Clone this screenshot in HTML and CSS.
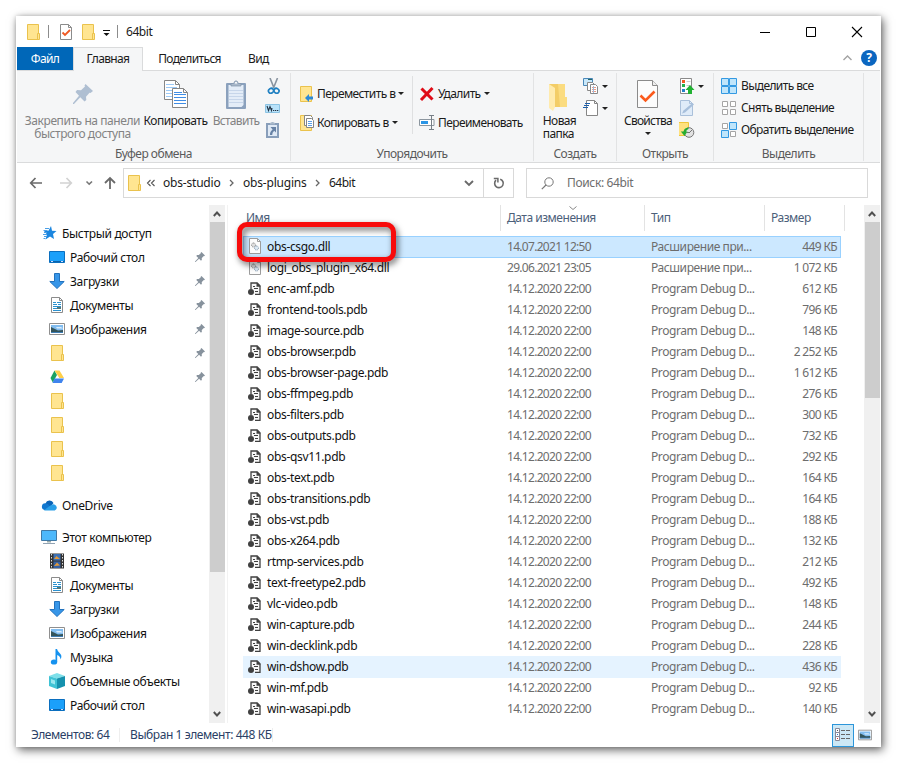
FILE: index.html
```html
<!DOCTYPE html>
<html lang="ru">
<head>
<meta charset="utf-8">
<title>64bit</title>
<link rel="stylesheet" href="styles.css">
</head>
<body>
<svg class="defs" aria-hidden="true">
  <symbol id="folder" viewBox="0 0 16 16"><path d="M2.5.5h11v10l1 1v4h-12z" fill="#ffe591" stroke="#eac24d"/><path d="M12.5 15V9.5h2V15" fill="#ffe591" stroke="#eac24d"/></symbol>
  <symbol id="doccheck" viewBox="0 0 16 16"><path d="M2.5.5h8l3 3v12h-11z" fill="#fff" stroke="#8b8b8b"/><path d="M10.500.5v3h3" fill="none" stroke="#8b8b8b"/><path d="M4.500 8.500l2.500 2.500 5-5" fill="none" stroke="#f05a23" stroke-width="1.800"/></symbol>
  <symbol id="bigcheck" viewBox="0 0 22 28"><path d="M.5.5h15l5 5v22H.5z" fill="#fcfcfc" stroke="#8b8b8b"/><path d="M15.500.5v5h5" fill="#eee" stroke="#8b8b8b"/><path d="M3.500 15.500l5 5 9-9" fill="none" stroke="#fb5a1c" stroke-width="2.600"/></symbol>
  <symbol id="bigpin" viewBox="0 0 20 20"><path d="M12.500 0L20 7l-2.500 2-1-.2-3.500 4 .3 3.200-1.800 1.500-4.200-4.300L1 20H0v-1l6-7.300L2.500 8 4 6l4 .2 4-3.700-.5-1z" fill="#afbfd2"/></symbol>
  <symbol id="copy" viewBox="0 0 24 28"><path d="M.5.500h11l4 4v15H.5z" fill="#fff" stroke="#868686"/><path d="M11.500.5v4h4" fill="none" stroke="#868686"/><path d="M2 4.500h8M2 7.500h11M2 10.500h11M2 13.500h6M2 16.500h6" stroke="#9ccaf7"/><path d="M8.500 8.500h11l4 4v15h-15z" fill="#fff" stroke="#868686"/><path d="M19.500 8.500v4h4" fill="none" stroke="#868686"/><path d="M10 12.500h8M10 14.500h12M10 17.500h12M10 20.500h12M10 23.500h12" stroke="#3f8de5"/></symbol>
  <symbol id="paste" viewBox="0 0 20 29"><rect y="3" width="20" height="26" rx="1" fill="#8ba1bd"/><path d="M2.500 5h15v20l-2 2h-13z" fill="#e4edf8"/><path d="M3 10.500h14M3 13.500h14M3 16.500h14M3 19.500h14M3 22.500h14" stroke="#c7d6ea"/><path d="M5 6V3.500h2.500L9 1h2l1.500 2.500H15V6z" fill="#a9b8ca" stroke="#8093aa" stroke-width=".7"/><circle cx="10" cy="2.800" r="1" fill="#fff"/></symbol>
  <symbol id="cut" viewBox="0 0 16 16"><path d="M5 0l4 10M12.500 0l-4 10" stroke="#8994a0" stroke-width="1.600"/><ellipse cx="6" cy="12.800" rx="2.600" ry="2.300" transform="rotate(-35 6 12.800)" fill="none" stroke="#2080c2" stroke-width="1.700"/><ellipse cx="11.500" cy="12.800" rx="2.600" ry="2.300" transform="rotate(35 11.500 12.800)" fill="none" stroke="#2080c2" stroke-width="1.700"/></symbol>
  <symbol id="path" viewBox="0 0 16 16"><path d="M.5 4.500h14v8H.5z" fill="#b8e2fa" stroke="#8bc3e3"/><path d="M2 6l1.500 4.500L5 6.500l1.500 4L7 8" fill="none" stroke="#234" stroke-width="1.100"/><path d="M8 10.500h1.300M10 10.500h1.300M12 10.500h1.300" stroke="#234"/></symbol>
  <symbol id="shortcut" viewBox="0 0 14 16"><path d="M0 1h13v15H0z" fill="#889eba"/><path d="M2 3h9v11H2z" fill="#dfe9f5"/><path d="M4 2.500V1l2-1h1l2 1v1.500z" fill="#a8b8ca"/><path d="M4.500 5H10v5.500L8.200 8.800Q6 10.500 6.200 13H4q-.3-3.500 2.600-5.600z" fill="#6782a5"/></symbol>
  <symbol id="moveto" viewBox="0 0 16 16"><path d="M1.500.5h11v15h-11z" fill="#ffe591" stroke="#eac24d"/><path d="M6 12l4-4v2.500h4v3h-4V16z" fill="#2c8ad8"/></symbol>
  <symbol id="copyto" viewBox="0 0 16 16"><path d="M1.500.5h11v15h-11z" fill="#ffe591" stroke="#eac24d"/><path d="M5.500.5h6l2 2v8h-8z" fill="#fff" stroke="#858585"/><path d="M7.500 3.500h5l2 2v7h-7z" fill="#fff" stroke="#858585"/><path d="M9 6.500h4M9 8.500h4M9 10.500h4" stroke="#5b9fe8"/></symbol>
  <symbol id="del" viewBox="0 0 16 16"><path d="M2.500 2.500l11 11M13.500 2l-11.500 12" stroke="#df0c17" stroke-width="3"/></symbol>
  <symbol id="rename" viewBox="0 0 16 16"><path d="M.5 4.500h14.500v6H.5z" fill="#fff" stroke="#8c969f"/><path d="M2 6h7v3H2z" fill="#2b95e6"/><path d="M10 .5h5M12.500.5v14M10 14.500h5" stroke="#777f86" fill="none"/></symbol>
  <symbol id="newfolder" viewBox="0 0 18 28"><path d="M0 1h16v13h2v10H4z" fill="#f3cd67"/><path d="M9 1h7v13h2v10h-7z" fill="#fbdc80"/><path d="M0 1l6 4v19l-2 4-4-3z" fill="#ffebae"/></symbol>
  <symbol id="newitem" viewBox="0 0 16 16"><path d="M.5.5h9v7h-9z" fill="#c9e8fa" stroke="#4a88b9"/><path d="M5 1.500h4" stroke="#266"/><path d="M4.500 4.500h5l3 3v5h-8z" fill="#fff" stroke="#888"/><path d="M7.500 6.500h5l2 2v7h-7z" fill="#fff" stroke="#888"/><path d="M9 9.500h4M9 11.500h4M9 13.500h4" stroke="#eb9a86"/><path d="M10.500 8v7" stroke="#9cbcdf"/></symbol>
  <symbol id="easy" viewBox="0 0 16 16"><path d="M3.500.5h8l3 3v12h-11z" fill="#fff" stroke="#868686"/><path d="M11.500.5v3h3" fill="none" stroke="#868686"/><path d="M2 3.500h5M1 5.500h5M0 7.500h5" stroke="#1d5ea8"/></symbol>
  <symbol id="open" viewBox="0 0 16 16"><path d="M1.500.5h11v15h-11z" fill="#fff" stroke="#8a8a8a"/><path d="M3 2h3v3H3z" fill="#f15a22"/><path d="M3 6h3v3H3z" fill="#23b14d"/><path d="M3 11h3v3H3z" fill="#2583c9"/><path d="M7.500 3.500h4M7.500 7.500h4" stroke="#ccc"/><path d="M11 7l4.500 5H13v4H9v-4H6.500z" fill="#22b233"/></symbol>
  <symbol id="edit" viewBox="0 0 16 16"><path d="M1.500.5h9l3 3v12h-12z" fill="#dfebf8" stroke="#aac0da"/><path d="M10.500.5v3h3" fill="none" stroke="#aac0da"/><path d="M3 13.500l1.500-3L13.500 3 15 4.500l-9 8z" fill="#a7bfdb"/></symbol>
  <symbol id="history" viewBox="0 0 16 16"><path d="M-.5.500h10v13h-10z" fill="#ffe17e" stroke="#efc63a"/><circle cx="10" cy="10.500" r="4.800" fill="#e2e2e2" stroke="#777"/><path d="M10 11l3-3M8 10.500h2" stroke="#777"/><path d="M9.500 5.500Q5 6 4.500 9.500H1.800L5.500 14l3-4.500H7Q7.500 7.500 9.500 7z" fill="#26ac31"/></symbol>
  <symbol id="selall" viewBox="0 0 16 16"><path d="M.5.5h7v7h-7zM8.500.5h7v7h-7zM.5 8.500h7v7h-7zM8.500 8.500h7v7h-7z" fill="#bfe5fb" stroke="#3399e2"/></symbol>
  <symbol id="selnone" viewBox="0 0 16 16"><path d="M1.500 1.500h5v5h-5zM9.500 1.500h5v5h-5zM1.500 9.500h5v5h-5zM9.500 9.500h5v5h-5z" fill="#fff" stroke="#a5a5a5"/></symbol>
  <symbol id="selinv" viewBox="0 0 16 16"><path d="M1.500 1.500h5v5h-5zM9.500 9.500h5v5h-5z" fill="#fff" stroke="#a5a5a5"/><path d="M8.500.5h7v7h-7zM.5 8.500h7v7h-7z" fill="#bfe5fb" stroke="#3399e2"/></symbol>
  <symbol id="star" viewBox="0 0 16 16"><path d="M10 1l1 4.800 4.500.3-3.500 3 1 5L9 11.500 4.500 14.500 6 9.500 3 6l4.500-.3z" fill="#1b86df"/><path d="M4 3.500h4M2.500 5.500h4M3 7.500h3M2 9.500h4M3 11.500h3M2.500 13.500h2" stroke="#4a9fe6"/></symbol>
  <symbol id="desktop" viewBox="0 0 16 16"><path d="M.5 2.500h15v11H.5z" fill="#1ba0fa" stroke="#0b6fbf"/><path d="M1 12.500h14" stroke="#0b62aa"/><path d="M2 12.500h2M12 12.500h2" stroke="#cdf"/></symbol>
  <symbol id="down" viewBox="0 0 16 16"><path d="M5.500.5h5v8h4.700L8 15.500.8 8.500h4.700z" fill="#3796e8" stroke="#2272bd"/></symbol>
  <symbol id="docs" viewBox="0 0 16 16"><path d="M2.500.5h8l3 3v12h-11z" fill="#fff" stroke="#8b8b8b"/><path d="M10.500.5v3h3" fill="none" stroke="#8b8b8b"/><path d="M4 5.500h3M8 5.500h4M4 7.500h4M9 7.500h3M4 9.500h8M4 11.500h4M4 13.500h8" stroke="#2a91cf"/><path d="M8 10h4v2H8z" fill="#577"/></symbol>
  <symbol id="pics" viewBox="0 0 16 16"><path d="M.5 2.500h15v11H.5z" fill="#fff" stroke="#8f8f8f"/><path d="M2 4h12v8H2z" fill="#82bdf0"/><path d="M7 6h5l2 1.500H8z" fill="#d9edfc"/><path d="M2 6l3 1.500 4 2 5-.5v2.500H2z" fill="#34545a"/><path d="M2 11.500h12" stroke="#3e7db5"/></symbol>
  <symbol id="drive" viewBox="0 0 16 16"><path d="M5.500 1.500L1.500 9l2.300 4.500L8 6z" fill="#1ca261"/><path d="M5.500 1.500h5L15 9h-4.700z" fill="#ffcf48"/><path d="M5.500 9.500H15l-2.300 4.500H3.500z" fill="#3f84ee"/></symbol>
  <symbol id="cloud" viewBox="0 0 16 16"><path d="M4.500 6.500a4.300 4.300 0 0 1 8-.5l-3 4-6 1z" fill="#0b64b8"/><path d="M3.500 13a3.400 3.400 0 0 1 .6-6.700q1.700 0 3 1l5 5.700z" fill="#1178d0"/><path d="M3 13.200l6-4.500q4-3 6 0 2 3-1.200 4.800H4z" fill="#2a9fe8"/></symbol>
  <symbol id="pc" viewBox="0 0 16 16"><path d="M.5 1.500h15v10H.5z" fill="#4db8fb" stroke="#4179a5"/><path d="M6 12h4v1.500H6z" fill="#9aa"/><path d="M2 14.500h12" stroke="#91a3b3"/></symbol>
  <symbol id="video" viewBox="0 0 16 16"><path d="M1 .5h14v15H1z" fill="#333"/><path d="M4.500 1h7v6.500h-7z" fill="#3c70b4"/><path d="M4.500 8.500h7V15h-7z" fill="#3561a3"/><path d="M5 6l2.500-3L11 6zM5 13l3-3.500 3 3z" fill="#e39a3a"/><path d="M2.500 1v14M13.500 1v14" stroke="#ddd" stroke-dasharray="1.500 1.500"/></symbol>
  <symbol id="music" viewBox="0 0 16 16"><ellipse cx="5" cy="13" rx="3.200" ry="2.600" fill="#1592ef"/><path d="M6.500 13V0H8q.5 2.500 3 4.500t.5 6q0-3.500-3.300-4.500v7z" fill="#1592ef"/></symbol>
  <symbol id="cube" viewBox="0 0 16 16"><path d="M0 3l8-3 8 3-8 2.500z" fill="#7ee0ea"/><path d="M0 3l8 2.500V16l-8-3z" fill="#3fc3d5"/><path d="M16 3L8 5.500V16l8-3z" fill="#1591ae"/><path d="M2 6l4 1.500v4L2 10z" fill="#9be8f0"/></symbol>
  <symbol id="pin" viewBox="0 0 10 10"><path d="M6.500 0L10 3.500l-1 .8-.6-.1-1.700 2 .2 1.600-.9.900-1.900-2L.5 10H0v-.5l3.300-3.600-2-1.900L2 3l1.800.1 2-1.800L5.700.8z" fill="#87929d"/></symbol>
  <symbol id="dll" viewBox="0 0 14 16"><path d="M1.500.5h8l3 3v12h-11z" fill="#fcfcfc" stroke="#9d9d9d"/><path d="M9.500.5v3h3" fill="none" stroke="#9d9d9d"/><circle cx="5.500" cy="7" r="2" fill="#ddd" stroke="#888" stroke-dasharray="1 .6"/><circle cx="8.500" cy="10" r="2" fill="#dde9f3" stroke="#7f97ac" stroke-dasharray="1 .6"/></symbol>
  <symbol id="pdb" viewBox="0 0 14 16"><path d="M3 7V1h6.200L12 3.800V12.300H7" fill="#f7f7f7" stroke="#404040" stroke-width="1.300"/><path d="M8.500.5v4.200h4.200z" fill="#404040"/><path d="M5 4.500h2M6 6.500h4M7 9.500h3" stroke="#404040"/><circle cx="3" cy="10" r="3" fill="#404040"/></symbol>
</svg>

<main class="window">
  <header class="titlebar">
    <svg class="i16 t-folder"><use href="#folder"/></svg>
    <i class="tsep"></i>
    <svg class="i16 t-doc"><use href="#doccheck"/></svg>
    <svg class="i16 t-new"><use href="#folder"/></svg>
    <svg class="t-drop" viewBox="0 0 7 6"><path d="M0 .5h7" stroke="#111"/><path d="M.5 3h6l-3 3z" fill="#111"/></svg>
    <i class="tsep"></i>
    <span class="title">64bit</span>
    <div class="winbtns">
      <svg viewBox="0 0 12 12"><path d="M1 6.500h10" stroke="#000"/></svg>
      <svg viewBox="0 0 12 12"><path d="M1.500 1.500h9v9h-9z" fill="none" stroke="#000"/></svg>
      <svg viewBox="0 0 12 12"><path d="M1 1l10 10M11 1L1 11" stroke="#000" stroke-width="1.100"/></svg>
    </div>
  </header>

  <nav class="tabs">
    <span class="tab file">Файл</span>
    <span class="tab active">Главная</span>
    <span class="tab share">Поделиться</span>
    <span class="tab view">Вид</span>
    <svg class="collapse" viewBox="0 0 9 6"><path d="M.5 5l4-4 4 4" fill="none" stroke="#a3a3a3" stroke-width="1.400"/></svg>
    <span class="help">?</span>
  </nav>

  <section class="ribbon">
    <div class="group g-clip">
      <div class="tools">
        <div class="big dim w-pin"><span class="pic"><svg width="20" height="20"><use href="#bigpin"/></svg></span><span>Закрепить на панели<br>быстрого доступа</span></div>
        <div class="big w-copy"><span class="pic"><svg width="24" height="28"><use href="#copy"/></svg></span><span>Копировать</span></div>
        <div class="big dim w-paste"><span class="pic"><svg width="20" height="29"><use href="#paste"/></svg></span><span>Вставить</span></div>
        <div class="stack"><div><svg class="i16"><use href="#cut"/></svg></div><div><svg class="i16"><use href="#path"/></svg></div><div><svg class="i16 narrow"><use href="#shortcut"/></svg></div></div>
      </div>
      <div class="caption">Буфер обмена</div>
    </div>
    <div class="group g-org">
      <div class="tools">
        <div class="pair left"><div><svg class="i16"><use href="#moveto"/></svg><span>Переместить в</span><i class="caret"></i></div><div><svg class="i16"><use href="#copyto"/></svg><span>Копировать в</span><i class="caret"></i></div></div>
        <div class="pair right"><div><svg class="i16"><use href="#del"/></svg><span>Удалить</span><i class="caret"></i></div><div><svg class="i16"><use href="#rename"/></svg><span>Переименовать</span></div></div>
      </div>
      <div class="caption">Упорядочить</div>
    </div>
    <div class="group g-new">
      <div class="tools">
        <div class="big w-new"><span class="pic"><svg width="18" height="28"><use href="#newfolder"/></svg></span><span>Новая<br>папка</span></div>
        <div class="stack"><div><svg class="i16"><use href="#newitem"/></svg><i class="caret"></i></div><div><svg class="i16"><use href="#easy"/></svg><i class="caret"></i></div></div>
      </div>
      <div class="caption">Создать</div>
    </div>
    <div class="group g-open">
      <div class="tools">
        <div class="big w-prop"><span class="pic"><svg width="22" height="28"><use href="#bigcheck"/></svg></span><span>Свойства</span><i class="caret"></i></div>
        <div class="stack"><div><svg class="i16"><use href="#open"/></svg><i class="caret"></i></div><div><svg class="i16"><use href="#edit"/></svg></div><div><svg class="i16"><use href="#history"/></svg></div></div>
      </div>
      <div class="caption">Открыть</div>
    </div>
    <div class="group g-sel">
      <div class="tools">
        <div class="stack"><div><svg class="i16"><use href="#selall"/></svg><span>Выделить все</span></div><div><svg class="i16"><use href="#selnone"/></svg><span>Снять выделение</span></div><div><svg class="i16"><use href="#selinv"/></svg><span>Обратить выделение</span></div></div>
      </div>
      <div class="caption">Выделить</div>
    </div>
  </section>

  <section class="address">
    <svg class="arrows" viewBox="0 0 90 20"><path d="M14 10H3M7.500 5L2.700 10l4.800 5" fill="none" stroke="#6a6a6a" stroke-width="1.700"/><path d="M32 10h11M38.500 5l4.800 5-4.800 5" fill="none" stroke="#d2d2d2" stroke-width="1.700"/><path d="M58.500 8.500l2.700 2.700L64 8.500" fill="none" stroke="#777" stroke-width="1.600"/><path d="M82 16V5M77 10l5-5 5 5" fill="none" stroke="#6a6a6a" stroke-width="1.800"/></svg>
    <div class="pathbox">
      <svg class="i16"><use href="#folder"/></svg>
      <svg class="dbl" viewBox="0 0 8 6"><path d="M3.500 0l-3 3 3 3M7.500 0l-3 3 3 3" fill="none" stroke="#555" stroke-width="1.100"/></svg>
      <span class="c1">obs-studio</span>
      <svg class="gt" viewBox="0 0 5 8"><path d="M1 1l3 3-3 3" fill="none" stroke="#666" stroke-width="1.300"/></svg>
      <span class="c2">obs-plugins</span>
      <svg class="gt" viewBox="0 0 5 8"><path d="M1 1l3 3-3 3" fill="none" stroke="#666" stroke-width="1.300"/></svg>
      <span class="c3">64bit</span>
      <svg class="hist" viewBox="0 0 10 7"><path d="M1 1l4 4 4-4" fill="none" stroke="#6a6a6a" stroke-width="1.900"/></svg>
      <div class="reload"><svg viewBox="0 0 12 12"><path d="M7.200 2.200A4.300 4.300 0 1 1 3 3.200" fill="none" stroke="#6a6a6a" stroke-width="1.600"/><path d="M.8 1.400h4.100v4" fill="none" stroke="#6a6a6a" stroke-width="1.500"/></svg></div>
    </div>
    <div class="search"><svg viewBox="0 0 13 13"><circle cx="8" cy="5" r="4.200" fill="none" stroke="#777"/><path d="M5 8L.8 12.200" stroke="#777" stroke-width="1.200"/></svg><span>Поиск: 64bit</span></div>
  </section>

  <section class="body">
    <aside class="nav" id="nav"></aside>
    <div class="scroll s-left"><svg viewBox="0 0 8 6"><path d="M.8 5L4 1.500 7.200 5" fill="none" stroke="#505050" stroke-width="1.900"/></svg><i></i><svg viewBox="0 0 8 6"><path d="M.8 1L4 4.500 7.200 1" fill="none" stroke="#505050" stroke-width="1.900"/></svg></div>
    <div class="files">
      <div class="head"><span>Имя</span><span>Дата изменения<svg class="sort" viewBox="0 0 8 4"><path d="M.5.5L4 3.500 7.500.5" fill="none" stroke="#888"/></svg></span><span>Тип</span><span>Размер</span></div>
      <div id="rows"></div>
      <div class="mark"></div>
    </div>
    <div class="scroll s-right"><svg viewBox="0 0 8 6"><path d="M.8 5L4 1.500 7.200 5" fill="none" stroke="#505050" stroke-width="1.900"/></svg><i></i><svg viewBox="0 0 8 6"><path d="M.8 1L4 4.500 7.200 1" fill="none" stroke="#505050" stroke-width="1.900"/></svg></div>
  </section>

  <footer class="status">
    <span class="st1">Элементов: 64</span><span class="st2">Выбран 1 элемент: 448 КБ</span>
    <div class="modes">
      <span class="mode on"><svg width="18" height="14" viewBox="0 0 18 14"><path d="M1.500.5h4v12h-4z" fill="#fff" stroke="#889"/><path d="M1.500 4.500h4M1.500 8.500h4" stroke="#889"/><path d="M3 2.500h1" stroke="#555"/><path d="M3 6.500h1" stroke="#27c"/><path d="M3 10.500h1" stroke="#d33"/><path d="M7 2.500h4M12 2.500h4M7 6.500h4M12 6.500h4M7 10.500h4M12 10.500h4" stroke="#666"/></svg></span>
      <span class="mode"><svg width="14" height="14" viewBox="0 1 16 14"><use href="#pics" width="16" height="16"/></svg></span>
    </div>
  </footer>
</main>
<script src="app.js"></script>
</body>
</html>
```
FILE: styles.css
```css
* { box-sizing: border-box; }
body { margin: 0; padding: 16px; height: 763px; overflow: hidden; background: #fff; font: 12px/14px "Noto Sans", "Open Sans", sans-serif; color: #1b1b1b; }
svg { display: block; flex: none; overflow: visible; }
span { white-space: nowrap; }
.defs { position: absolute; width: 0; height: 0; }
.i16 { width: 16px; height: 16px; }
.window { width: 865px; height: 731px; background: #fff; display: flex; flex-direction: column; box-shadow: 2px 3px 9px rgba(0,0,0,.6), 0 0 4px rgba(0,0,0,.15); }

.titlebar { height: 31px; display: flex; align-items: center; padding-left: 9px; flex: none; }
.tsep { width: 1px; height: 13px; background: #8c8c8c; margin-left: 7px; }
.t-doc { margin-left: 9px; margin-top: 1px; }
.t-new { margin-left: 6px; }
.t-drop { width: 7px; height: 6px; margin-left: 7px; margin-top: 3px; }
.title { margin-left: 8px; letter-spacing: -.45px; padding-top: 1px; }
.winbtns { margin-left: auto; display: flex; gap: 34px; padding-right: 18px; }
.winbtns svg { width: 12px; height: 12px; }

.tabs { height: 24px; margin: 0 1px; display: flex; position: relative; flex: none; border-bottom: 1px solid #dadbdc; letter-spacing: -.63px; }
.tab { height: 24px; line-height: 24px; text-align: center; }
.file { width: 56px; height: 23px; background: #0067b8; color: #fff; }
.active { width: 70px; background: #f5f6f7; border: 1px solid #dadbdc; border-bottom: 0; line-height: 22px; }
.share { margin-left: 15px; width: 63px; }
.view { margin-left: 27px; width: 22px; text-align: left; }
.collapse { width: 9px; height: 6px; margin: 8px 9px 0 auto; }
.help { width: 16px; height: 16px; margin: 3px 3px 0 0; border-radius: 50%; background: #0b66c0; color: #fff; font-weight: 700; text-align: center; line-height: 16px; letter-spacing: 0; }

.ribbon { height: 92px; margin: 0 1px; background: #f5f6f7; border-bottom: 1px solid #dadbdc; display: flex; flex: none; letter-spacing: -.6px; }
.group { height: 88px; margin-top: 2px; border-right: 1px solid #e2e3e4; padding-top: 3px; display: flex; flex-direction: column; flex: none; }
.g-clip { width: 274px; } .g-org { width: 243px; } .g-new { width: 83px; } .g-open { width: 97px; } .g-sel { width: 150px; }
.tools { display: flex; height: 70px; }
.caption { text-align: center; color: #5a5a5a; letter-spacing: -.5px; line-height: 15px; }
.big { display: flex; flex-direction: column; align-items: center; text-align: center; line-height: 13px; }
.pic { height: 38px; display: flex; align-items: center; padding-bottom: 2px; }
.dim { color: #838383; }
.w-pin { width: 121px; margin-left: 5px; letter-spacing: -.43px; } .w-copy { width: 67px; margin-left: -1px; letter-spacing: -.5px; } .w-paste { width: 54px; letter-spacing: -.7px; }
.w-new { width: 39px; margin-left: 6px; text-align: left; } .w-new .pic { padding: 3px 3px 0 0; }
.w-prop { width: 56px; margin-left: 3px; letter-spacing: -.75px; }
.caret { border: 3px solid transparent; border-top-color: #222; border-bottom: 0; width: 6px; height: 3px; margin-left: 3px; }
.w-prop .caret { margin: 5px 0 0; }
.stack { padding-top: 2px; display: grid; grid-auto-rows: 22px; margin-left: 2px; align-content: start; }
.stack > div { display: flex; height: 16px; align-items: center; }
.narrow { width: 14px; margin-left: 1px; }
.g-new .stack { margin-left: 4px; }
.g-open .stack { margin-left: 3px; }
.g-sel .stack { margin-left: 7px; }
.g-sel .stack span { margin-left: 4px; }
.pair { padding-top: 3px; }
.pair > div { height: 29px; display: flex; align-items: center; }
.pair span { margin-left: 2px; padding-top: 1px; }
.pair.left { width: 122px; padding-left: 8px; border-right: 1px solid #dfe0e1; height: 58px; }
.pair.right { padding-left: 6px; }
.pair.right span { margin-left: 3px; }

.address { height: 42px; display: flex; padding: 5px 13px 7px 12px; flex: none; }
.arrows { width: 90px; height: 20px; margin: 5px 0 0 0; }
.pathbox { margin-left: 5px; width: 391px; height: 30px; border: 1px solid #d9d9d9; display: flex; align-items: center; padding-left: 2px; letter-spacing: -.2px; }
.dbl { width: 8px; height: 6px; margin-left: 5px; }
.c1 { margin-left: 8px; width: 57px; } .gt { width: 5px; height: 8px; margin-left: 9px; } .c2 { margin-left: 9px; width: 63px; } .c3 { margin-left: 9px; letter-spacing: -.5px; }
.hist { width: 10px; height: 7px; margin-left: auto; margin-right: 9px; }
.reload { width: 30px; height: 28px; border-left: 1px solid #d9d9d9; display: grid; place-items: center; }
.reload svg { width: 12px; height: 12px; }
.search { margin-left: 12px; width: 342px; height: 30px; border: 1px solid #d9d9d9; display: flex; align-items: center; padding-left: 14px; color: #6d6d6d; letter-spacing: -.35px; }
.search svg { width: 13px; height: 13px; } .search span { margin-left: 13px; }

.body { display: flex; height: 518px; flex: none; }
.nav { width: 193px; padding-top: 16px; letter-spacing: -.32px; }
.nrow { height: 24px; display: flex; align-items: center; padding-left: 25px; color: #111; }
.nrow span { margin-left: 5px; padding-top: 1px; }
.nrow.sub { padding-left: 33px; }
.nrow.gap { margin-top: 8px; }
.nrow .pinned { width: 10px; height: 10px; margin-left: auto; margin-right: 4px; }
.scroll { width: 16px; background: #f0f0f0; display: flex; flex-direction: column; align-items: center; padding: 6px 0; }
.scroll svg { width: 8px; height: 6px; }
.scroll i { width: 15px; background: #cdcdcd; margin-top: 5px; margin-bottom: auto; }
.s-left i { height: 350px; } .s-right i { height: 176px; }
.files { width: 637px; margin-left: 2px; border-left: 1px solid #f2f2f2; padding-left: 15px; position: relative; }
.head { display: grid; grid-template-columns: 258px 144px 120px 80px; height: 25px; color: #4c607a; line-height: 26px; letter-spacing: -.48px; }
.head span { padding-left: 6px; border-right: 1px solid #e3e3e3; position: relative; }
.head span:first-child { padding-left: 3px; }
.sort { position: absolute; left: 68px; top: 1px; width: 8px; height: 4px; }
#rows { padding-top: 6px; }
.row { height: 21px; width: 598px; display: grid; grid-template-columns: 24px 240px 144px 120px 1fr; align-items: start; color: #6d6d6d; line-height: 21px; }
.row svg { width: 14px; height: 16px; margin: 2px 0 0 5px; }
.row .pdb { margin-top: 4px; }
.row .name { color: #111; letter-spacing: -.33px; }
.row .date { letter-spacing: -.7px; }
.row .type { letter-spacing: -.42px; }
.row .size { text-align: right; padding-right: 4px; letter-spacing: -.65px; }
.row.sel, .row.hover { height: 22px; margin-bottom: -1px; background: #e5f3ff; }
.row.sel { background: #cce8ff; box-shadow: inset 0 0 0 1px #99d1ff; }
.mark { position: absolute; left: 9px; top: 17px; width: 159px; height: 40px; border: 5px solid #f80b0b; border-radius: 10px; filter: drop-shadow(2px 3px 3px rgba(0,0,0,.6)); }

.status { height: 24px; display: flex; align-items: center; color: #2b3f66; padding-left: 15px; letter-spacing: -.42px; }
.st1 { width: 89px; border-right: 1px solid #eee; }
.st2 { padding-left: 10px; width: 153px; border-right: 1px solid #eee; }
.modes { margin-left: auto; display: flex; padding-right: 5px; }
.mode { width: 22px; height: 23px; display: grid; place-items: center; }
.mode.on { background: #cce8f6; border: 1px solid #2c96da; }
```
FILE: app.js
```js
const use = (id, cls = "i16") => `<svg class="${cls}"><use href="#${id}"/></svg>`;

const nav = [
  ["star", "Быстрый доступ", "top"],
  ["desktop", "Рабочий стол", "sub", 1], ["down", "Загрузки", "sub", 1],
  ["docs", "Документы", "sub", 1], ["pics", "Изображения", "sub", 1],
  ["folder", "", "sub", 1], ["drive", "", "sub", 1],
  ["folder", "", "sub"], ["folder", "", "sub"], ["folder", "", "sub"], ["folder", "", "sub"],
  ["cloud", "OneDrive", "gap"], ["pc", "Этот компьютер", "gap"],
  ["video", "Видео", "sub"], ["docs", "Документы", "sub"], ["down", "Загрузки", "sub"],
  ["pics", "Изображения", "sub"], ["music", "Музыка", "sub"],
  ["cube", "Объемные объекты", "sub"], ["desktop", "Рабочий стол", "sub"]
];
document.getElementById("nav").innerHTML = nav.map(([icon, text, kind, pinned]) =>
  `<div class="nrow ${kind}">${use(icon)}<span>${text}</span>${pinned ? use("pin", "pinned") : ""}</div>`).join("");

const files = [
  ["obs-csgo.dll", "449"], ["logi_obs_plugin_x64.dll", "1 072"], ["enc-amf.pdb", "612"],
  ["frontend-tools.pdb", "796"], ["image-source.pdb", "148"], ["obs-browser.pdb", "2 252"],
  ["obs-browser-page.pdb", "1 612"], ["obs-ffmpeg.pdb", "276"], ["obs-filters.pdb", "300"],
  ["obs-outputs.pdb", "732"], ["obs-qsv11.pdb", "292"], ["obs-text.pdb", "164"],
  ["obs-transitions.pdb", "164"], ["obs-vst.pdb", "188"], ["obs-x264.pdb", "132"],
  ["rtmp-services.pdb", "212"], ["text-freetype2.pdb", "492"], ["vlc-video.pdb", "148"],
  ["win-capture.pdb", "244"], ["win-decklink.pdb", "228"], ["win-dshow.pdb", "436"],
  ["win-mf.pdb", "92"], ["win-wasapi.pdb", "140"]
];
const dates = ["14.07.2021 12:50", "29.06.2021 23:05"];
document.getElementById("rows").innerHTML = files.map(([name, size], i) => {
  const kind = name.split(".").pop();
  const state = i === 0 ? " sel" : name === "win-dshow.pdb" ? " hover" : "";
  return `<div class="row${state}">${use(kind, kind)}<span class="name">${name}</span>` +
    `<span class="date">${dates[i] || "14.12.2020 22:00"}</span>` +
    `<span class="type">${kind === "dll" ? "Расширение при..." : "Program Debug D..."}</span><span class="size">${size} КБ</span></div>`;
}).join("");
```
